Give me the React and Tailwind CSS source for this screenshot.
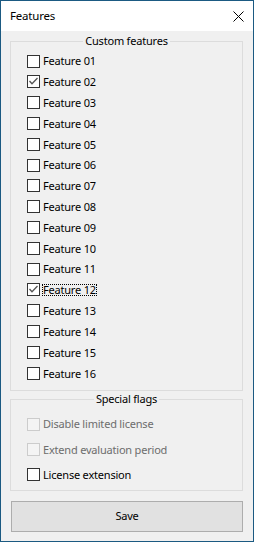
const features = [
  { name: 'Feature 01', checked: false, h: 'h-[20px]' },
  { name: 'Feature 02', checked: true, h: 'h-[21px]' },
  { name: 'Feature 03', checked: false, h: 'h-[21px]' },
  { name: 'Feature 04', checked: false, h: 'h-[21px]' },
  { name: 'Feature 05', checked: false, h: 'h-[21px]' },
  { name: 'Feature 06', checked: false, h: 'h-[20px]' },
  { name: 'Feature 07', checked: false, h: 'h-[21px]' },
  { name: 'Feature 08', checked: false, h: 'h-[21px]' },
  { name: 'Feature 09', checked: false, h: 'h-[21px]' },
  { name: 'Feature 10', checked: false, h: 'h-[21px]' },
  { name: 'Feature 11', checked: false, h: 'h-[20px]' },
  { name: 'Feature 12', checked: true, focused: true, h: 'h-[21px]' },
  { name: 'Feature 13', checked: false, h: 'h-[21px]' },
  { name: 'Feature 14', checked: false, h: 'h-[21px]' },
  { name: 'Feature 15', checked: false, h: 'h-[21px]' },
  { name: 'Feature 16', checked: false, h: 'h-[21px]' },
];

const flags = [
  { name: 'Disable limited license', disabled: true, h: 'h-[26px]' },
  { name: 'Extend evaluation period', disabled: true, h: 'h-[25px]' },
  { name: 'License extension', disabled: false, h: 'h-[25px]' },
];

function Box({ checked, disabled }) {
  return (
    <span
      className={
        'w-[13px] h-[13px] shrink-0 border flex items-center justify-center ' +
        (disabled ? 'border-[#cccccc] bg-[#f4f4f4]' : 'border-[#333333] bg-white')
      }
    >
      {checked && (
        <svg width="11" height="11" viewBox="0 0 11 11">
          <polyline points="1.5,5 4,7.8 9.5,2" fill="none" stroke="#555555" strokeWidth="1.3" />
        </svg>
      )}
    </span>
  );
}

function Row({ item }) {
  return (
    <div className={'flex items-center ' + item.h}>
      <Box checked={item.checked} disabled={item.disabled} />
      <span
        className={
          'ml-[2px] border leading-[10px] h-[12px] whitespace-nowrap ' +
          (item.focused ? 'border-dotted border-black' : 'border-transparent') +
          (item.disabled ? ' text-[#6d6d6d]' : ' text-black')
        }
      >
        {item.name}
      </span>
    </div>
  );
}

export default function App() {
  return (
    <div
      className="w-[254px] h-[542px] border border-[#1b5a82] bg-[#f0f0f0] flex flex-col text-[11px] tracking-[-0.2px] text-black"
      style={{ fontFamily: '"Noto Sans", "Open Sans", sans-serif' }}
    >
      <div className="h-[30px] bg-white flex items-center justify-between pl-[9px] pr-[9px] shrink-0">
        <span className="text-[11.5px]">Features</span>
        <svg width="11" height="11" viewBox="0 0 11 11">
          <path d="M0.5 0.5 L10.5 10.5 M10.5 0.5 L0.5 10.5" stroke="#000" strokeWidth="1" />
        </svg>
      </div>

      <fieldset className="mt-[2px] ml-[9px] w-[233px] border border-[#dcdcdc]">
        <legend className="mx-auto px-[2px] leading-[16px]">Custom features</legend>
        <div className="pl-[16px] pt-[2px] pb-[6px]">
          {features.map((f) => (
            <Row key={f.name} item={f} />
          ))}
        </div>
      </fieldset>

      <fieldset className="ml-[9px] w-[233px] border border-[#dcdcdc]">
        <legend className="mx-auto px-[2px] leading-[16px]">Special flags</legend>
        <div className="pl-[16px] pt-[4px] pb-[3px]">
          {flags.map((f) => (
            <Row key={f.name} item={f} />
          ))}
        </div>
      </fieldset>

      <button className="mt-[10px] ml-[10px] w-[232px] h-[31px] border border-[#adadad] bg-[#e1e1e1] text-black text-[11px]">
        Save
      </button>
    </div>
  );
}
